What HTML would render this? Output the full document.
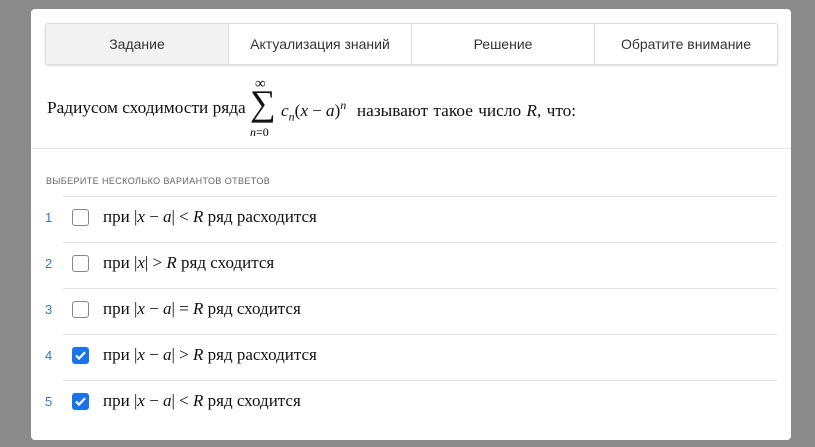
<!DOCTYPE html><html><head><meta charset="utf-8"><style>
body{margin:0;width:815px;height:447px;background:#8a8a8a;font-family:"Liberation Sans",sans-serif;overflow:hidden;position:relative}
.card{position:absolute;left:31px;top:9px;width:760px;height:431px;background:#fff;border-radius:4px}
.tabs{position:absolute;left:14px;top:14px;width:731px;height:40px;border:1px solid #ddd;border-radius:3px;display:flex;box-shadow:0 1px 2px rgba(0,0,0,.15)}
.tabs div{flex:1;text-align:center;line-height:40px;font-size:14px;color:#333;border-left:1px solid #ddd}
.tabs div:first-child{border-left:none;background:#f2f2f2}
.s{font-family:"Liberation Serif",serif;color:#111}
.m{font-family:"Liberation Serif",serif;font-style:italic}
.q{position:absolute;left:16px;top:89px;font-size:17.3px}
.hr{position:absolute;left:0;right:0;top:139px;border-top:1px solid #e6e6e6}
.lab{position:absolute;left:15px;top:167px;font-size:9px;color:#666;letter-spacing:.4px}
.row{position:absolute;left:32px;width:714px;height:46px;border-top:1px solid #e2e2e2}
.num{position:absolute;left:-18px;top:13px;font-size:13px;color:#3a78c0}
.cb{position:absolute;left:9px;top:12px;width:17px;height:17px;border:1.5px solid #888;border-radius:3px;box-sizing:border-box}
.cb.on{background:#1a73e8;border-color:#1a73e8}
.t{position:absolute;left:40px;top:10px;font-size:17px}
.op{margin:0 4px}
</style></head><body><div class="card">
<div class="tabs"><div>Задание</div><div>Актуализация знаний</div><div>Решение</div><div>Обратите внимание</div></div>
<div class="q s">Радиусом сходимости ряда</div>
<div class="s" style="position:absolute;left:219px;top:76px;font-size:36px;line-height:36px">∑</div>
<div class="s" style="position:absolute;left:224px;top:67px;font-size:15px">∞</div>
<div class="m" style="position:absolute;left:219px;top:116px;font-size:12px">n<span style="font-style:normal">=0</span></div>
<div class="s" style="position:absolute;left:250px;top:89px;font-size:17.3px;word-spacing:1px"><span class="m">c<sub style="font-size:12px">n</sub></span>(<span class="m">x</span><span class="op">−</span><span class="m">a</span>)<sup class="m" style="font-size:12px">n</sup>&nbsp; называют такое число <span class="m">R</span>, что:</div>
<div class="hr"></div>
<div class="lab">ВЫБЕРИТЕ НЕСКОЛЬКО ВАРИАНТОВ ОТВЕТОВ</div>
<div class="row" style="top:187px"><span class="num">1</span><span class="cb"></span><span class="t s">при |<span class="m">x</span> − <span class="m">a</span>| &lt; <span class="m">R</span> ряд расходится</span></div>
<div class="row" style="top:233px"><span class="num">2</span><span class="cb"></span><span class="t s">при |<span class="m">x</span>| &gt; <span class="m">R</span> ряд сходится</span></div>
<div class="row" style="top:279px"><span class="num">3</span><span class="cb"></span><span class="t s">при |<span class="m">x</span> − <span class="m">a</span>| = <span class="m">R</span> ряд сходится</span></div>
<div class="row" style="top:325px"><span class="num">4</span><span class="cb on"><svg width="17" height="17" viewBox="0 0 17 17" style="position:absolute;left:-1.5px;top:-1.5px"><path d="M4 8.5l3 3 6-6.3" stroke="#fff" stroke-width="2.2" fill="none"/></svg></span><span class="t s">при |<span class="m">x</span> − <span class="m">a</span>| &gt; <span class="m">R</span> ряд расходится</span></div>
<div class="row" style="top:371px"><span class="num">5</span><span class="cb on"><svg width="17" height="17" viewBox="0 0 17 17" style="position:absolute;left:-1.5px;top:-1.5px"><path d="M4 8.5l3 3 6-6.3" stroke="#fff" stroke-width="2.2" fill="none"/></svg></span><span class="t s">при |<span class="m">x</span> − <span class="m">a</span>| &lt; <span class="m">R</span> ряд сходится</span></div>
</div></body></html>
